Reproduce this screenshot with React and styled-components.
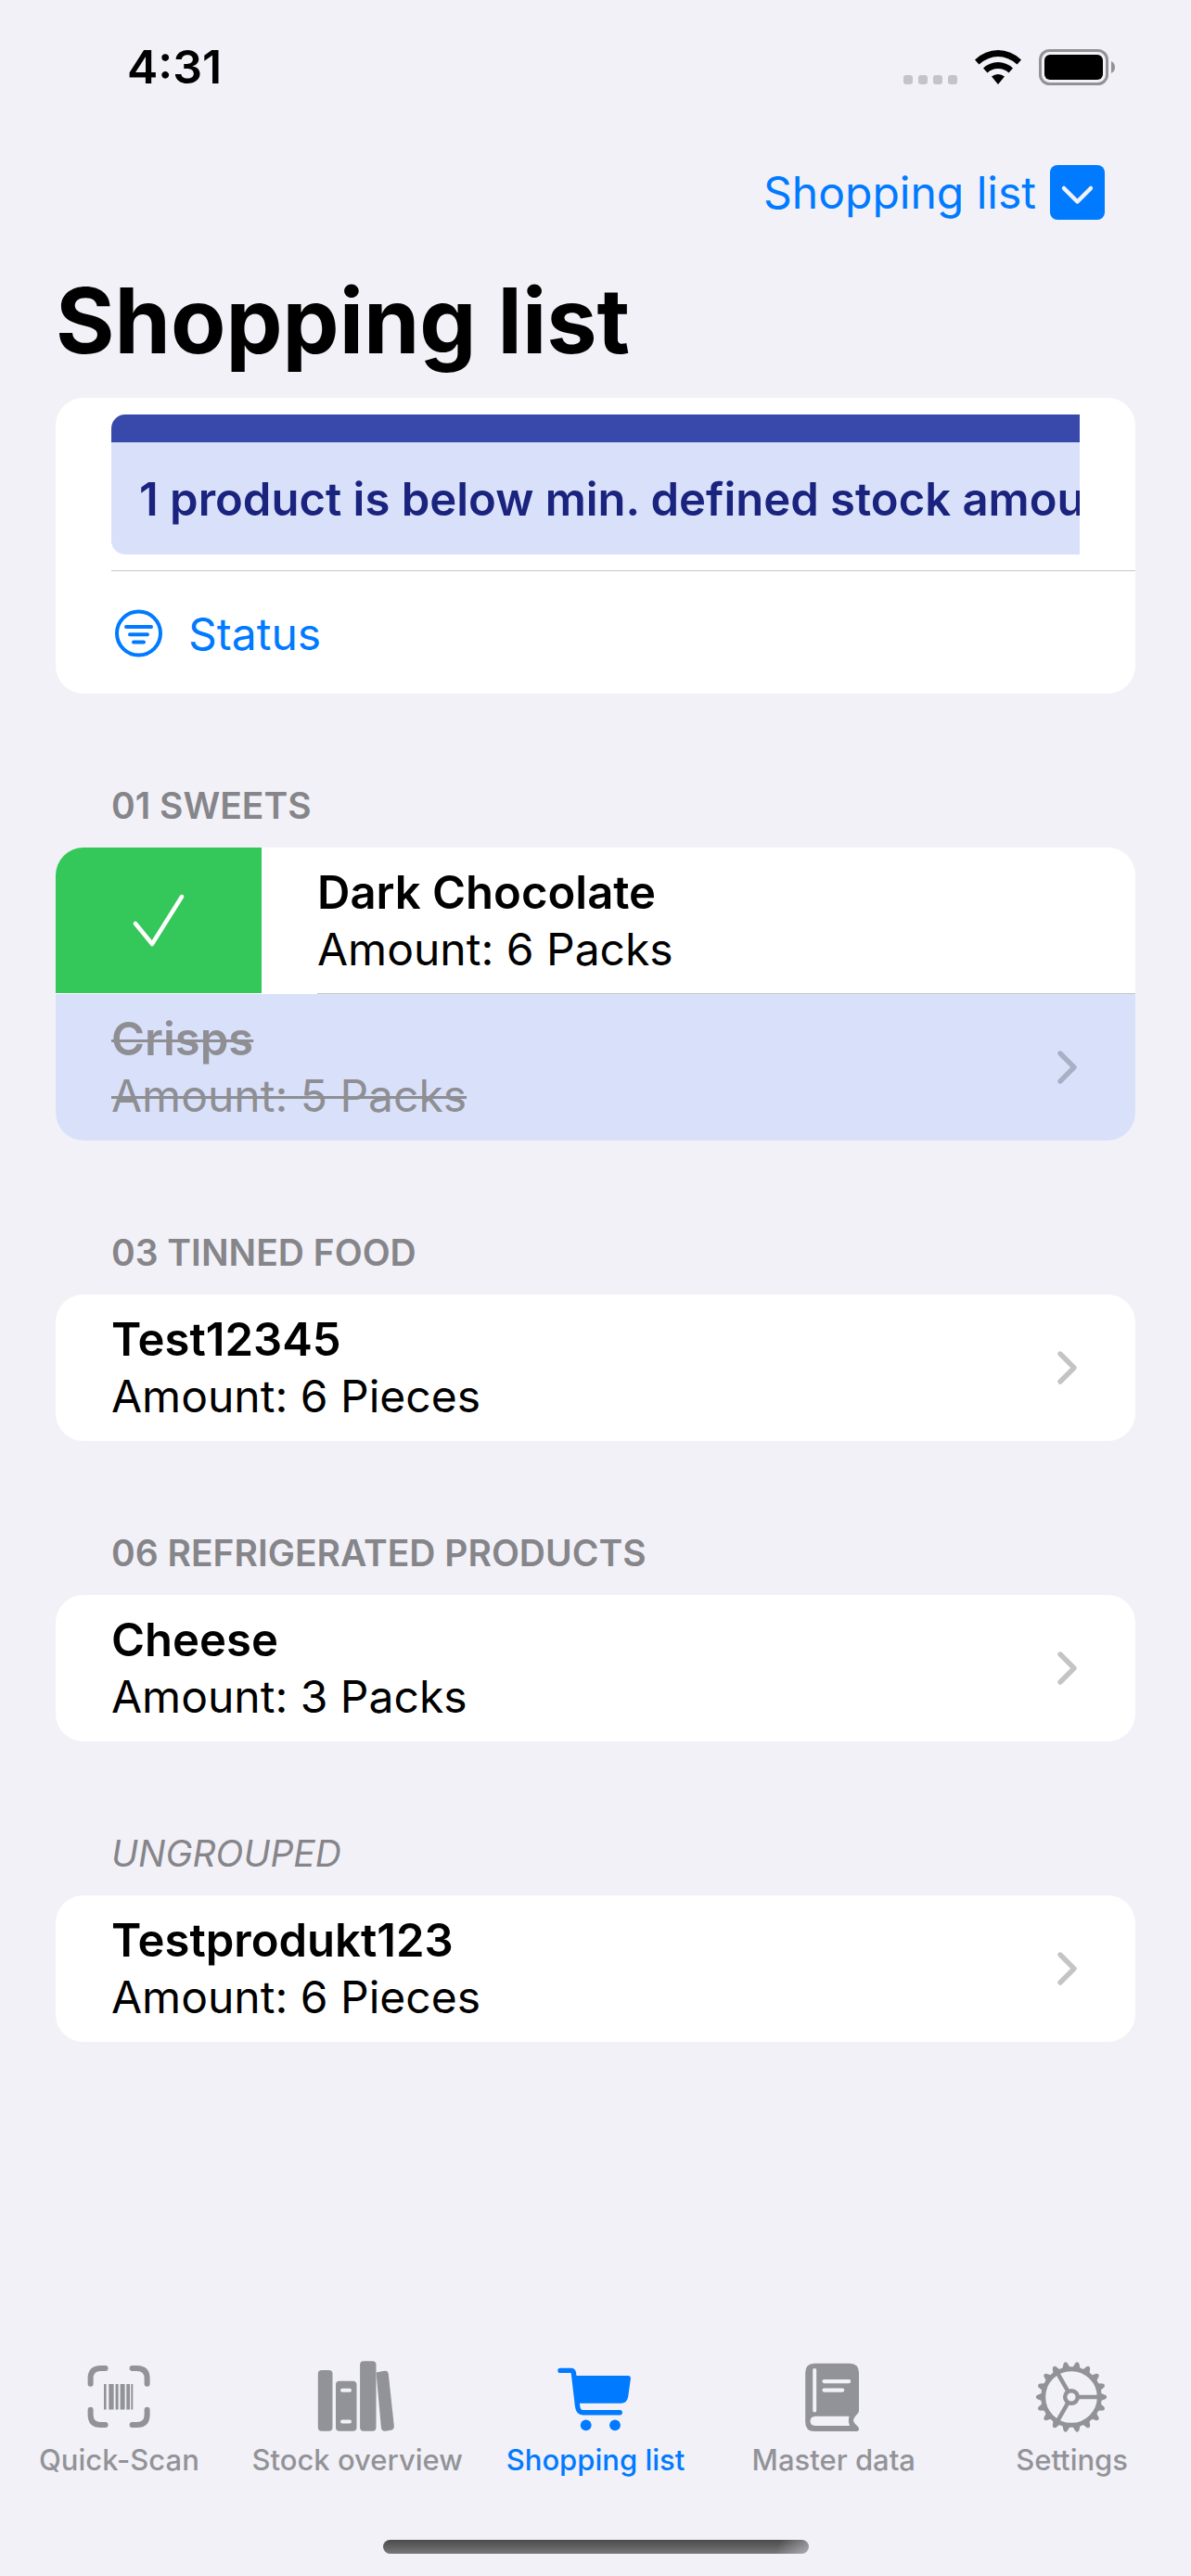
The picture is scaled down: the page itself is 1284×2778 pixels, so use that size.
import React from 'react';
import styled, { createGlobalStyle, css } from 'styled-components';

const GlobalStyle = createGlobalStyle`
  *, *::before, *::after { box-sizing: border-box; }
  body {
    margin: 0;
    background: #f2f1f7;
    color: #000;
    font-family: Inter, "Liberation Sans", sans-serif;
    font-size: 48px;
    line-height: 61px;
  }
  h1, h2, p, ul { margin: 0; padding: 0; }
  ul { list-style: none; }
  a { color: inherit; text-decoration: none; }
  button { font: inherit; border: 0; padding: 0; background: none; cursor: pointer; }
  svg { display: block; flex: none; }
`;

const Screen = styled.div`
  min-height: 100vh;
  display: flex;
  flex-direction: column;
`;

const StatusBar = styled.header`
  display: flex;
  align-items: center;
  justify-content: space-between;
  height: 145px;
  padding: 0 82px 0 137px;
`;

const Clock = styled.time`
  font-size: 50px;
  font-weight: 600;
`;

const StatusIcons = styled.div`
  display: flex;
  align-items: center;
  gap: 19px;
`;

const Toolbar = styled.div`
  display: flex;
  justify-content: flex-end;
  padding: 33px 93px 0 60px;
`;

const ListPicker = styled.button`
  display: flex;
  align-items: center;
  gap: 15px;
  height: 59px;
  color: #007aff;
`;

const Title = styled.h1`
  padding: 49px 60px 23px;
  font-size: 97px;
  font-weight: 700;
  line-height: 120px;
`;

const Content = styled.main`
  flex: 1;
  padding: 0 60px;
`;

const Card = styled.div`
  overflow: hidden;
  border-radius: 30px;
  background: #fff;
`;

const AlertRow = styled.div`
  padding: 18px 60px 17px;
`;

const Alert = styled.p`
  overflow: hidden;
  height: 151px;
  padding: 31px 30px 0;
  border-top: 30px solid #3949ab;
  border-radius: 15px 0 0 15px;
  background: #d9e1fa;
  color: #1a237e;
  font-size: 49px;
  font-weight: 600;
  white-space: nowrap;
`;

const Divider = styled.hr`
  height: 1px;
  margin: 0 0 0 60px;
  border: 0;
  background: #c6c6c8;
`;

const FilterButton = styled.button`
  display: flex;
  align-items: center;
  gap: 28px;
  width: 100%;
  height: 132px;
  padding: 2px 63px 0;
  color: #007aff;
`;

const Section = styled.section`
  padding-top: 97px;
`;

const SectionTitle = styled.h2`
  padding: 0 60px 22px;
  color: #85858a;
  font-size: 39px;
  font-weight: ${(p) => (p.$plain ? 400 : 600)};
  font-style: ${(p) => (p.$plain ? 'italic' : 'normal')};
  line-height: 47px;
  text-transform: uppercase;
`;

const Item = styled.li`
  display: flex;
  background: ${(p) => (p.$done ? '#d9e1fa' : '#fff')};
`;

const DoneButton = styled.button`
  display: grid;
  place-items: center;
  width: 222px;
  margin-bottom: 1px;
  background: #34c759;
`;

const ItemLink = styled.a`
  flex: 1;
  display: flex;
  align-items: center;
  justify-content: space-between;
  height: 158px;
  margin-left: 60px;
  padding-right: 60px;
  color: ${(p) => (p.$done ? '#8e8e93' : '#000')};
  &:not(${Item}:last-child > &) {
    border-bottom: 1px solid #c6c6c8;
  }
  ${(p) => p.$done && css`
    & p { text-decoration: line-through; text-decoration-thickness: 3px; }
  `}
`;

const Name = styled.p`
  font-size: 49px;
  font-weight: 600;
`;

const Amount = styled.p``;

const Chevron = ({ color = '#c4c4c6' }) => (
  <svg width="26" height="38" viewBox="0 0 26 38" fill="none" stroke={color} strokeWidth="5.4" strokeLinecap="round" strokeLinejoin="round">
    <path d="M5 4 L20 19 L5 34" />
  </svg>
);

const TabBar = styled.nav`
  display: flex;
  height: 193px;
`;

const Tab = styled.a`
  flex: 1 1 0;
  min-width: 0;
  display: flex;
  flex-direction: column;
  align-items: center;
  gap: 8px;
  color: ${(p) => (p.$active ? '#007aff' : '#929398')};
  font-size: 31px;
  font-weight: 500;
  line-height: 36px;
  white-space: nowrap;
`;

const HomeIndicator = styled.div`
  width: 459px;
  height: 15px;
  margin: 3px auto 24px;
  border-radius: 8px;
  background:
    linear-gradient(115deg, transparent 92%, rgba(242, 241, 247, 0.45) 100%),
    linear-gradient(#4b4b4d, #77777a);
`;

const TabIcon = ({ children }) => (
  <svg width="90" height="84" viewBox="0 0 90 84" fill="currentColor">{children}</svg>
);

const ScanIcon = () => (
  <TabIcon>
    <path
      d="M14.600 27.700V22Q14.600 11 25.600 11H30.600M59.600 11H64.600Q75.600 11 75.600 22V27.700M75.600 55.700V61Q75.600 72 64.600 72H59.600M30.600 72H25.600Q14.600 72 14.600 61V55.700"
      fill="none" stroke="currentColor" strokeWidth="6" strokeLinecap="round"
    />
    <path d="M29 28h2.600v27.500h-2.600zM34.300 28h5.300v27.500h-5.300zM41.600 28h3v27.500h-3zM46.600 28h5v27.500h-5zM53.300 28h3.700v27.500h-3.700zM58.300 28h2v27.500h-2z" />
  </TabIcon>
);

const BooksIcon = () => (
  <TabIcon>
    <rect x="2.800" y="13" width="15.700" height="65.700" rx="4" />
    <path fillRule="evenodd" d="M26 24.700h14.500q4 0 4 4v46q0 4-4 4H26q-4 0-4-4v-46q0-4 4-4zM29 32.700a2 2 0 0 0 0 4h8a2 2 0 0 0 0-4zM29 66.500a2 2 0 0 0 0 4h8a2 2 0 0 0 0-4z" />
    <rect x="48.100" y="3.300" width="17.400" height="75.400" rx="4" />
    <path d="M65.500 15.500l9-1.700q3.800-.4 4.300 3.400L84.800 73q.3 4-3.400 4.800l-6 .9q-4 .4-4.500-3.600z" />
  </TabIcon>
);

const CartIcon = () => (
  <TabIcon>
    <path d="M7 13.400H18.500Q21 13.400 21.400 16L25.600 52Q26.400 58.700 31.500 58.700H71.200" fill="none" stroke="currentColor" strokeWidth="5.400" strokeLinecap="round" strokeLinejoin="round" />
    <path d="M21 19H80Q83 19 82.900 22L80.300 41Q79.300 48.700 72.500 48.700H27z" />
    <circle cx="34.700" cy="72.300" r="5.900" />
    <circle cx="66" cy="72.300" r="5.900" />
  </TabIcon>
);

const BookIcon = () => (
  <TabIcon>
    <path fillRule="evenodd" d="M24.200 5.700H62Q72 5.700 72 15.700V56.500Q72 58.500 70.500 60Q66 64.500 66 67.500Q66.500 70 70.500 73.500Q73 76 71.500 78Q71 79 69.500 79H24.200Q14.200 79 14.200 69V15.700Q14.200 5.700 24.200 5.700zM22.200 13V56.500a2 2 0 0 0 4 0V13a2 2 0 0 0-4 0zM34.500 23a2 2 0 0 0 0 4.200H61.200a2 2 0 0 0 0-4.200zM34.500 32.500a2 2 0 0 0 0 4.200H54.200a2 2 0 0 0 0-4.200zM25 62.700Q19.500 63 19.500 68Q19.500 72.800 25 73H62Q60 67.500 61.500 62.700z" />
  </TabIcon>
);

const teeth = Array.from({ length: 18 }, (_, i) => i * 20 + 10);

const GearIcon = () => (
  <TabIcon>
    <g fill="none" stroke="currentColor">
      <circle cx="44" cy="42" r="30.300" strokeWidth="5" />
      <circle cx="44" cy="42" r="6.800" strokeWidth="4.500" />
      <path d="M52 42H73M40 35.100L29.500 16.900M40 48.900L29.500 67.100" strokeWidth="4.500" />
    </g>
    {teeth.map((angle) => (
      <path key={angle} transform={`rotate(${angle} 44 42)`} d="M39.500 11L42 5Q44 2.600 46 5L48.500 11z" />
    ))}
  </TabIcon>
);

const groups = [
  {
    title: '01 Sweets',
    items: [
      { name: 'Dark Chocolate', amount: 'Amount: 6 Packs', swiped: true },
      { name: 'Crisps', amount: 'Amount: 5 Packs', done: true },
    ],
  },
  { title: '03 Tinned food', items: [{ name: 'Test12345', amount: 'Amount: 6 Pieces' }] },
  { title: '06 Refrigerated products', items: [{ name: 'Cheese', amount: 'Amount: 3 Packs' }] },
  { title: 'Ungrouped', plain: true, items: [{ name: 'Testprodukt123', amount: 'Amount: 6 Pieces' }] },
];

const tabs = [
  { label: 'Quick-Scan', Icon: ScanIcon },
  { label: 'Stock overview', Icon: BooksIcon },
  { label: 'Shopping list', Icon: CartIcon, active: true },
  { label: 'Master data', Icon: BookIcon },
  { label: 'Settings', Icon: GearIcon },
];

export default function App() {
  return (
    <Screen>
      <GlobalStyle />
      <StatusBar>
        <Clock>4:31</Clock>
        <StatusIcons>
          <svg width="58" height="39" viewBox="0 0 58 39" fill="#c4c3c9">
            {[0, 16, 32, 48].map((x) => <rect key={x} x={x} y="28" width="10" height="10" rx="3" />)}
          </svg>
          <svg width="50" height="39" viewBox="0 -1 50 39">
            <path d="M0 10.500Q11 0 25 0T50 10.500L45.500 15.500Q36 7 25 7T4.500 15.500zM9 19.500Q16 13 25 13T41 19.500L36.500 24.500Q32 20 25 20T13.500 24.500zM18 28.500Q21 26 25 26T32 28.500L25 37z" />
          </svg>
          <svg width="82" height="39" viewBox="0 0 82 39">
            <rect x="1.500" y="1.500" width="72" height="36" rx="10" fill="none" stroke="#929296" strokeWidth="3" />
            <rect x="6" y="6" width="63" height="27" rx="6" />
            <path d="M78 13Q82 15 82 19.500T78 26z" fill="#929296" />
          </svg>
        </StatusIcons>
      </StatusBar>
      <Toolbar>
        <ListPicker>
          Shopping list
          <svg width="59" height="59" viewBox="0 0 59 59">
            <rect width="59" height="59" rx="8" fill="#007aff" />
            <path d="M15 25L29.500 39.500L44 25" fill="none" stroke="#f2f1f7" strokeWidth="4.500" strokeLinecap="round" strokeLinejoin="round" />
          </svg>
        </ListPicker>
      </Toolbar>
      <Title>Shopping list</Title>
      <Content>
        <Card>
          <AlertRow>
            <Alert>1 product is below min. defined stock amount</Alert>
          </AlertRow>
          <Divider />
          <FilterButton>
            <svg width="52" height="52" viewBox="0 0 52 52" fill="none" stroke="currentColor" strokeWidth="4" strokeLinecap="round">
              <circle cx="26.500" cy="26" r="23.500" />
              <path d="M13 19H40M17 27.300H36M21 35.500H32" />
            </svg>
            Status
          </FilterButton>
        </Card>
        {groups.map((group) => (
          <Section key={group.title}>
            <SectionTitle $plain={group.plain}>{group.title}</SectionTitle>
            <Card as="ul">
              {group.items.map((item) => (
                <Item key={item.name} $done={item.done}>
                  {item.swiped && (
                    <DoneButton aria-label="Mark as done">
                      <svg width="58" height="58" viewBox="0 0 58 58" fill="none" stroke="#fff" strokeWidth="4.500" strokeLinecap="round" strokeLinejoin="round">
                        <path d="M4 32L22 54L54 3" />
                      </svg>
                    </DoneButton>
                  )}
                  <ItemLink href="#" $done={item.done}>
                    <div>
                      <Name>{item.name}</Name>
                      <Amount>{item.amount}</Amount>
                    </div>
                    {!item.swiped && <Chevron color={item.done ? '#a8b0c4' : undefined} />}
                  </ItemLink>
                </Item>
              ))}
            </Card>
          </Section>
        ))}
      </Content>
      <TabBar>
        {tabs.map(({ label, Icon, active }) => (
          <Tab key={label} href="#" $active={active}>
            <Icon />
            {label}
          </Tab>
        ))}
      </TabBar>
      <HomeIndicator />
    </Screen>
  );
}
